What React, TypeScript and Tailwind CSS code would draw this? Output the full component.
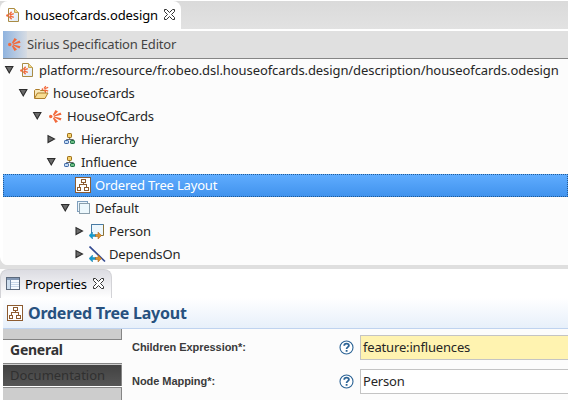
import type { ReactNode } from "react";

function Rays({ size = 12 }: { size?: number }) {
  return (
    <svg width={size} height={size} viewBox="0 0 12 12" className="block shrink-0" fill="#f26a3c">
      <circle cx="1.6" cy="6" r="1.6" />
      <path d="M3.6 4.3 6 0l2.3 1.3L4.6 5zM4.3 5.4 10.6 2.2l1 2.2-7 1.5zM4.3 6.6l6.3 3.2 1-2.2-7-1.5zM3.6 7.7 6 12l2.3-1.3L4.6 7z" />
    </svg>
  );
}

function FileIcon() {
  return (
    <svg width="14" height="16" viewBox="0 0 14 16" className="block shrink-0">
      <defs>
        <linearGradient id="page" x1="0" y1="0" x2="1" y2="1">
          <stop offset="0" stopColor="#fff" />
          <stop offset="1" stopColor="#dce9f6" />
        </linearGradient>
      </defs>
      <path d="M2.5 1.5h6l4 4v9h-10z" fill="url(#page)" stroke="#a98b45" />
      <path d="M8.5 1.5v4h4" fill="#f0d589" stroke="#c5a452" />
      <g stroke="#f26a3c" strokeWidth="1.4">
        <circle cx="1.4" cy="8.5" r="1.2" fill="#f26a3c" stroke="none" />
        <path d="M3.3 7.5 5.6 4.8M3.8 8.1l4-1.5M3.8 8.9l4 1.5M3.3 9.5l2.3 2.7" />
      </g>
    </svg>
  );
}

function FolderIcon() {
  return (
    <svg width="17" height="16" viewBox="0 0 17 16" className="block shrink-0">
      <path d="M1.5 13V5.5l1-1h4l1 1h5V8" fill="#f8e7b8" stroke="#ad7d2a" />
      <path d="M1.5 13.5 4.5 8H15l-3 5.5z" fill="#f7dc90" stroke="#ad7d2a" strokeLinejoin="round" />
      <g stroke="#f26a3c" strokeWidth="1.2">
        <circle cx="9.5" cy="4.2" r=".9" fill="#f26a3c" stroke="none" />
        <path d="m11 3.3 1.8-2.2M11.5 3.8l3.7-1.4M11.5 4.7l3.7 1.4M11 5.2l1.8 2" />
      </g>
    </svg>
  );
}

function DiagramIcon() {
  return (
    <svg width="12" height="12" viewBox="0 0 12 12" className="block shrink-0" fill="none">
      <path d="M5.7 4v2.5M2.5 8V6.5h6.8V8" stroke="#666" />
      <rect x="3.5" y=".5" width="4" height="4" rx=".7" fill="#f6d26e" stroke="#9b6c16" />
      <rect x=".5" y="7.5" width="4" height="3" rx=".7" fill="#c2dcf5" stroke="#3c65a4" />
      <rect x="6.5" y="7.5" width="4" height="3" rx=".7" fill="#6cbd83" stroke="#176c43" />
    </svg>
  );
}

function LayoutIcon() {
  return (
    <svg width="16" height="16" viewBox="0 0 16 16" className="block shrink-0" fill="#fff" stroke="#8d5b30" shapeRendering="crispEdges">
      <path d="M.5.5h15v15H.5z" />
      <path d="M6.5 2.5h4v3h-4zM2.5 10.5h3v3h-3zM9.5 10.5h4v3h-4zM8.5 5.5v2M4.5 10.5v-3h7v3" />
    </svg>
  );
}

function LayersIcon() {
  return (
    <svg width="14" height="14" viewBox="0 0 14 14" className="block shrink-0" shapeRendering="crispEdges">
      <path d="M.5.5h10v10H.5z" fill="#eaf5fd" stroke="#7f9fbd" />
      <path d="M2.5 2.5h10v10h-10z" fill="#edf8fd" stroke="#8b9fac" />
    </svg>
  );
}

function Arrows() {
  return (
    <>
      <path d="M0 12.5 3.5 9v2.5H7v2H3.5V16z" fill="#109bd0" stroke="#08719f" strokeWidth=".4" />
      <path d="M12.5 12.5 9 9v2.5H6.500v2H9V16z" fill="#dc922f" stroke="#a75b12" strokeWidth=".5" />
    </>
  );
}

function NodeIcon() {
  return (
    <svg width="17" height="17" viewBox="0 0 17 17" className="block shrink-0" fill="none">
      <path d="M2.500 10V1.5h12v11H12" fill="#edf7fd" stroke="#8a7238" />
      <path d="M2.5 10V1.5h12" stroke="#477ba6" />
      <Arrows />
    </svg>
  );
}

function EdgeIcon() {
  return (
    <svg width="17" height="17" viewBox="0 0 17 17" className="block shrink-0" fill="none">
      <path d="m.5.5 15.500 15" stroke="#344b91" strokeWidth="1.7" />
      <Arrows />
    </svg>
  );
}

function Close() {
  return (
    <svg width="11" height="11" viewBox="0 0 11 11" className="mb-px block shrink-0" fill="#fff" stroke="#333">
      <path d="M.5.5h2l3 3 3-3h2v2l-3 3 3 3v2h-2l-3-3-3 3h-2v-2l3-3-3-3z" />
    </svg>
  );
}

function TableIcon() {
  return (
    <svg width="14" height="13" viewBox="0 0 14 13" className="mb-px block shrink-0" shapeRendering="crispEdges" fill="none">
      <path d="M.5.5h13v12H.5z" fill="#f7fbff" stroke="#5c6a7d" />
      <path d="M1 1h12v2H1z" fill="#8398b5" />
      <path d="M1 3h3v9H1z" fill="#cddded" />
      <path d="M4.5 3v9" stroke="#7b91ad" />
      <path d="M5 5.5h8M5 7.5h8M5 9.5h8" stroke="#c9d8e9" />
    </svg>
  );
}

function Toggle({ open }: { open: boolean }) {
  return (
    <svg width="10" height="10" viewBox="0 0 10 10" className="block shrink-0" fill="#6a6a6a" stroke="#2c2c2c" strokeWidth="1.1">
      <path d={open ? "M1.6 1.500h7.3L5.250 8z" : "M2 1.600v7L8.500 5.100z"} />
    </svg>
  );
}

type RowProps = { pad: string; open?: boolean; icon: ReactNode; box: string; label: string; text?: string };

function Row({ pad, open, icon, box, label, text = "tracking-[-0.14px]" }: RowProps) {
  return (
    <div className={`flex h-[23px] items-center pb-px ${pad}`}>
      {open !== undefined && <Toggle open={open} />}
      <span className={`flex shrink-0 items-center ${box}`}>{icon}</span>
      <span className={`whitespace-nowrap ${text}`}>{label}</span>
    </div>
  );
}

function Help() {
  return (
    <svg width="15" height="15" viewBox="0 0 15 15" className="block shrink-0" fill="none" stroke="#2b6395">
      <circle cx="7.5" cy="7.5" r="6.5" fill="#fff" strokeWidth="1.1" />
      <path d="M5.2 5.8c0-3 4.7-2.8 4.7-.2 0 1.5-2.3 1.6-2.3 3.3M7.6 10v1.8" strokeWidth="1.8" />
    </svg>
  );
}

function Field({ label, value, fill }: { label: string; value: string; fill: string }) {
  return (
    <div className="flex h-[25px] items-center">
      <span className="w-[208px] whitespace-nowrap pb-[2px] pl-[10px] font-['Liberation_Sans',sans-serif] text-[11px] font-bold tracking-[-0.05px] text-[#3a3a3a]">{label}</span>
      <span className="w-[30px] pl-[9px]"><Help /></span>
      <span className={`flex h-[25px] flex-1 items-center border-y border-l border-[#c4c4c4] pb-px pl-[2px] tracking-[-0.17px] ${fill}`}>{value}</span>
    </div>
  );
}

export default function App() {
  return (
    <div className="flex h-[400px] w-[568px] flex-col overflow-hidden bg-white font-['Noto_Sans',sans-serif] text-[13px] leading-[18px] text-[#262626]">
      <div className="mt-px flex h-7 shrink-0 bg-gradient-to-b from-[#dadada] to-[#e2e2e2]">
        <div className="flex w-[181px] items-center rounded-t-lg bg-white pl-[6px]">
          <FileIcon />
          <span className="ml-[5px] w-[139px] whitespace-nowrap tracking-[-0.1px] text-black">houseofcards.odesign</span>
          <Close />
        </div>
      </div>
      <div className="ml-[3px] mt-[2px] flex h-7 shrink-0 items-center border-b border-[#858585] bg-[#e0e0e0] text-[#444]">
        <span className="flex h-full w-6 items-center bg-gradient-to-r from-[#8fb3df] to-[#d7dce3] pl-[5px]"><Rays size={13} /></span>
        <span className="pb-[2px] tracking-[-0.18px]">Sirius Specification Editor</span>
      </div>
      <div className="h-[210px] shrink-0 bg-[#dfdfdf]">
        <div className="h-[206px] overflow-hidden rounded-bl-lg bg-white">
          <div className="ml-[3px] bg-[#fcfcfc]">
            <Row pad="pl-[1px]" open icon={<FileIcon />} box="w-[25px] pl-[6px]" label="platform:/resource/fr.obeo.dsl.houseofcards.design/description/houseofcards.odesign" text="tracking-[-0.084px]" />
            <Row pad="pl-[15px]" open icon={<FolderIcon />} box="w-[25px] pl-[5px]" label="houseofcards" text="tracking-[-0.08px]" />
            <Row pad="pl-[29px]" open icon={<Rays size={13} />} box="w-[25px] pl-[7px]" label="HouseOfCards" />
            <Row pad="pl-[43px]" open={false} icon={<DiagramIcon />} box="w-[25px] pl-[8px]" label="Hierarchy" />
            <Row pad="pl-[43px]" open icon={<DiagramIcon />} box="w-[25px] pl-[8px]" label="Influence" />
            <div className="bg-gradient-to-b from-[#60adff] to-[#4092ed] outline-1 -outline-offset-1 outline-dotted outline-[#225b96]">
              <Row pad="pl-[72px]" icon={<LayoutIcon />} box="w-[20px]" label="Ordered Tree Layout" text="text-white tracking-[-0.17px]" />
            </div>
            <Row pad="pl-[57px]" open icon={<LayersIcon />} box="w-[25px] pl-[7px]" label="Default" />
            <Row pad="pl-[71px]" open={false} icon={<NodeIcon />} box="w-[25px] pl-[5px]" label="Person" />
            <Row pad="pl-[71px]" open={false} icon={<EdgeIcon />} box="w-[25px] pl-[5px]" label="DependsOn" />
          </div>
        </div>
      </div>
      <div className="flex h-[29px] shrink-0">
        <div className="flex w-28 items-center rounded-t-lg border-x border-t border-[#d3d3d7] bg-gradient-to-b from-[#dcdce2] to-white pl-[5px] text-black">
          <TableIcon />
          <span className="ml-[5px] w-[68px] tracking-[-0.12px]">Properties</span>
          <Close />
        </div>
      </div>
      <div className="ml-[3px] flex h-[31px] shrink-0 items-center border-b border-[#bfd3ef] bg-gradient-to-b from-white to-[#e7f0fa] pl-1 font-bold text-[#27517f]">
        <LayoutIcon />
        <span className="ml-[5px] text-[16px] tracking-[-0.25px]">Ordered Tree Layout</span>
      </div>
      <div className="ml-[3px] flex flex-1 bg-[#fcfcfc]">
        <div className="flex w-[119px] flex-col bg-[#cdcdcd]">
          <div className="h-[11px] border-b border-r border-[#858585]" />
          <div className="flex h-[24px] items-center border-b border-[#858585] bg-[#fcfcfc] pb-[3px] pl-[7px] text-[14px] font-bold tracking-[-0.25px] text-[#333]">General</div>
          <div className="mt-px flex h-[21px] items-center border-r border-[#858585] bg-gradient-to-b from-[#424242] to-[#565656] pb-[2px] pl-[7px] text-[13px] text-[#303030]">Documentation</div>
          <div className="h-[2px] border-b border-t border-b-[#858585] border-t-white" />
          <div className="flex-1 border-r border-[#858585]" />
        </div>
        <div className="flex flex-1 flex-col gap-[9px] pt-[6px]">
          <Field label="Children Expression*:" value="feature:influences" fill="bg-[#fff3b0]" />
          <Field label="Node Mapping*:" value="Person" fill="bg-white" />
        </div>
      </div>
    </div>
  );
}
